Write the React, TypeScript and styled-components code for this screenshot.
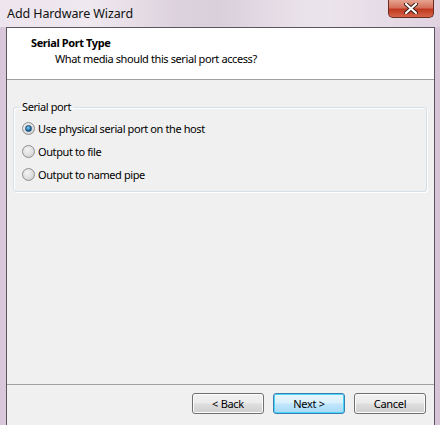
import React, { useState } from "react";
import styled, { createGlobalStyle } from "styled-components";

const GlobalStyle = createGlobalStyle`
  html, body {
    margin: 0;
    padding: 0;
    overflow: hidden;
  }
  body {
    font-family: "Noto Sans", "DejaVu Sans", sans-serif;
    font-size: 11px;
    letter-spacing: -0.4px;
    color: #000;
  }
`;

const Window = styled.div`
  width: 440px;
  height: 425px;
  display: flex;
  flex-direction: column;
  background: linear-gradient(90deg, #d9c6da 0%, #e6dbe6 20%, #cbbccd 50%, #ddd0de 75%, #d6c3d7 100%);
  overflow: hidden;
`;

const TitleBar = styled.div`
  height: 27px;
  display: flex;
  align-items: center;
  justify-content: space-between;
  padding-left: 7px;
  background: linear-gradient(90deg, rgba(255,255,255,0.55) 0%, rgba(255,255,255,0.2) 40%, rgba(255,255,255,0.45) 70%, rgba(255,255,255,0.25) 100%);
`;

const Caption = styled.span`
  font-size: 12.5px;
  letter-spacing: -0.1px;
  color: #111;
  margin-top: -1px;
`;

const CloseButton = styled.div`
  align-self: flex-start;
  width: 46px;
  height: 18px;
  margin-right: 6px;
  border: 1px solid #6b2b20;
  border-top: none;
  border-radius: 0 0 5px 5px;
  background: linear-gradient(180deg, #e6a491 0%, #d4715a 45%, #c0391f 55%, #d5654a 100%);
  display: flex;
  align-items: center;
  justify-content: center;
  box-sizing: border-box;
`;

const Client = styled.div`
  flex: 1;
  margin: 0 5px 0 6px;
  border: 1px solid #5b5560;
  border-bottom: none;
  background: #f0f0f0;
  display: flex;
  flex-direction: column;
`;

const Header = styled.div`
  background: #fff;
  height: 52px;
  border-bottom: 1px solid #a0a0a0;
  padding: 7px 0 0 24px;
  box-sizing: border-box;
`;

const HeaderTitle = styled.div`
  font-weight: bold;
  line-height: 15px;
`;

const HeaderSub = styled.div`
  padding-left: 24px;
  line-height: 17px;
`;

const Body = styled.div`
  flex: 1;
  padding: 20px 7px 0 6px;
`;

const GroupBox = styled.fieldset`
  margin: 0;
  padding: 6px 0 9px 8px;
  border: 1px solid #d5dfe5;
  border-radius: 3px;
  box-shadow: inset 1px 1px 0 #fff, 1px 1px 0 #fff;
  display: flex;
  flex-direction: column;
  gap: 7px;
`;

const Legend = styled.legend`
  padding: 0 2px;
  margin-left: -2px;
  line-height: 14px;
`;

const RadioRow = styled.label`
  display: flex;
  align-items: center;
  gap: 3px;
  height: 16px;
  cursor: default;
`;

const RadioCircle = styled.span<{ $checked: boolean }>`
  width: 13px;
  height: 13px;
  box-sizing: border-box;
  border-radius: 50%;
  border: 1px solid #8e8f8f;
  background: radial-gradient(circle at 40% 35%, #f4f4f4 0%, #dcdcdc 60%, #c8c8c8 100%);
  display: flex;
  align-items: center;
  justify-content: center;
  &::after {
    content: "";
    display: ${(p) => (p.$checked ? "block" : "none")};
    width: 5px;
    height: 5px;
    border-radius: 50%;
    background: radial-gradient(circle at 40% 35%, #8fd0f0 0%, #1b6fa6 60%, #0c3b66 100%);
    border: 1px solid #1a4a78;
  }
`;

const Footer = styled.div`
  border-top: 1px solid #a0a0a0;
  height: 32px;
  display: flex;
  justify-content: flex-end;
  align-items: flex-start;
  gap: 9px;
  padding: 8px 8px 0 0;
`;

const Button = styled.button<{ $primary?: boolean }>`
  width: 72px;
  height: 21px;
  font-family: inherit;
  font-size: 11px;
  letter-spacing: -0.3px;
  padding: 0;
  border-radius: 3px;
  border: 1px solid ${(p) => (p.$primary ? "#3c7fb1" : "#707070")};
  background: ${(p) =>
    p.$primary
      ? "linear-gradient(180deg, #eaf6fd 0%, #d9f0fc 45%, #bee6fd 55%, #a7d9f5 100%)"
      : "linear-gradient(180deg, #f2f2f2 0%, #ebebeb 45%, #dddddd 55%, #cfcfcf 100%)"};
  box-shadow: inset 0 0 0 1px ${(p) => (p.$primary ? "#48d4fb" : "#fcfcfc")};
  color: #000;
`;

const options = [
  "Use physical serial port on the host",
  "Output to file",
  "Output to named pipe",
];

const App: React.FC = () => {
  const [selected, setSelected] = useState(0);

  return (
    <>
      <GlobalStyle />
      <Window>
        <TitleBar>
          <Caption>Add Hardware Wizard</Caption>
          <CloseButton>
            <svg width="14" height="11" viewBox="0 0 14 11">
              <path
                d="M2 1 L12 10 M12 1 L2 10"
                stroke="#3a1a14"
                strokeWidth="4"
                strokeLinecap="round"
              />
              <path
                d="M2 1 L12 10 M12 1 L2 10"
                stroke="#fff"
                strokeWidth="2.2"
                strokeLinecap="round"
              />
            </svg>
          </CloseButton>
        </TitleBar>
        <Client>
          <Header>
            <HeaderTitle>Serial Port Type</HeaderTitle>
            <HeaderSub>What media should this serial port access?</HeaderSub>
          </Header>
          <Body>
            <GroupBox>
              <Legend>Serial port</Legend>
              {options.map((label, i) => (
                <RadioRow key={label} onClick={() => setSelected(i)}>
                  <RadioCircle $checked={selected === i} />
                  {label}
                </RadioRow>
              ))}
            </GroupBox>
          </Body>
          <Footer>
            <Button>&lt; Back</Button>
            <Button $primary>Next &gt;</Button>
            <Button>Cancel</Button>
          </Footer>
        </Client>
      </Window>
    </>
  );
};

export default App;
